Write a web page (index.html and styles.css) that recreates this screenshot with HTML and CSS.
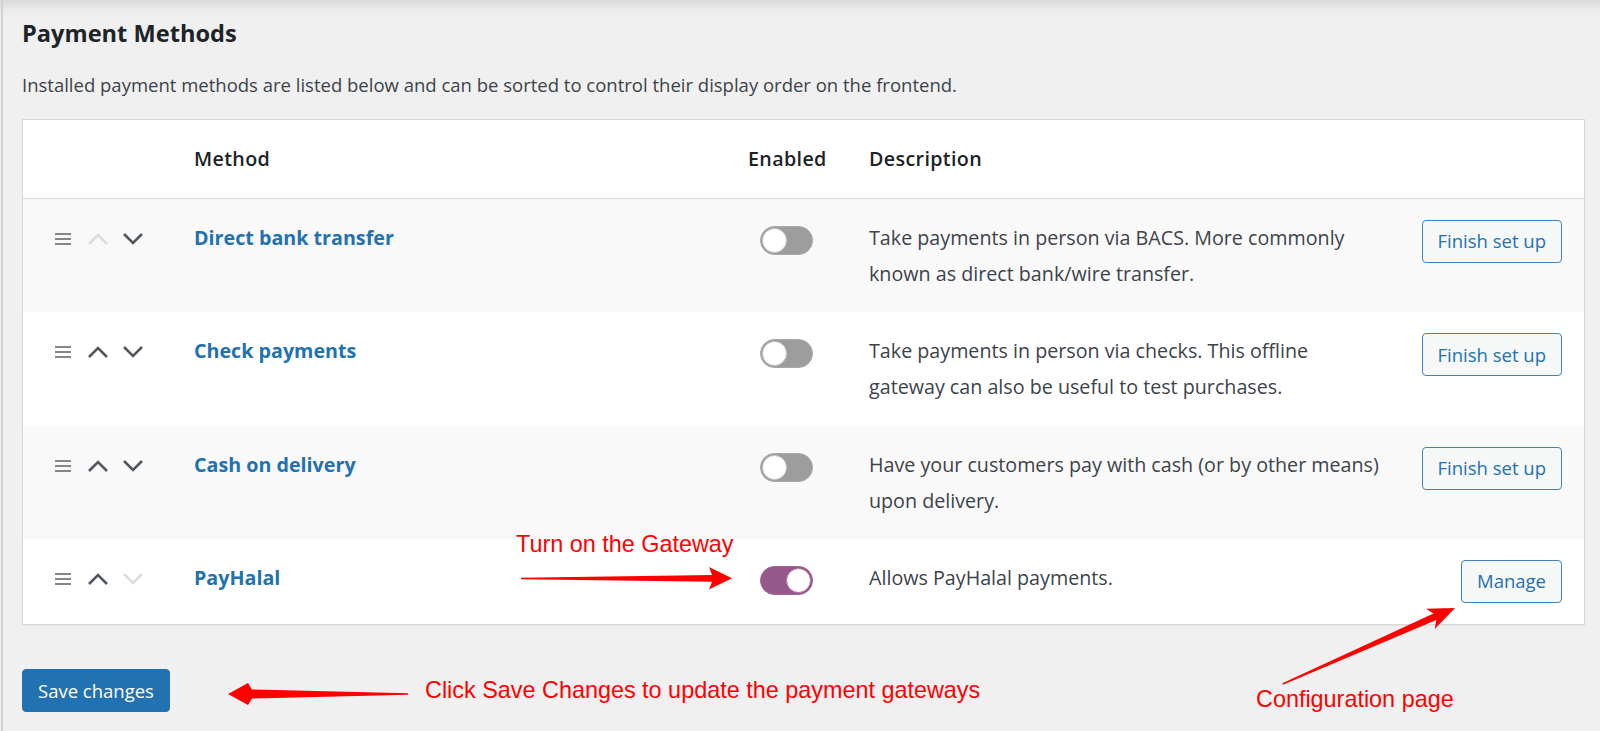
FILE: index.html
```html
<!DOCTYPE html>
<html lang="en">
<head>
<meta charset="utf-8">
<title>Payment Methods</title>
<link rel="stylesheet" href="styles.css">
</head>
<body>
<div class="page">
  <h2 class="title">Payment Methods</h2>
  <p class="intro">Installed payment methods are listed below and can be sorted to control their display order on the frontend.</p>

  <div class="gateways">
    <div class="row head">
      <div class="sort"></div>
      <div class="name">Method</div>
      <div class="status">Enabled</div>
      <div class="desc">Description</div>
      <div class="action"></div>
    </div>

    <div class="row alt">
      <div class="sort">
        <svg class="drag" width="16" height="12" viewBox="0 0 16 12"><rect y="0" width="16" height="2"/><rect y="5" width="16" height="2"/><rect y="10" width="16" height="2"/></svg>
        <svg class="chev off" width="22" height="12" viewBox="0 0 22 12"><path d="M2 11 L11 2 L20 11"/></svg>
        <svg class="chev" width="22" height="12" viewBox="0 0 22 12"><path d="M2 1 L11 10 L20 1"/></svg>
      </div>
      <div class="name"><a href="#">Direct bank transfer</a></div>
      <div class="status"><span class="toggle"></span></div>
      <div class="desc">Take payments in person via BACS. More commonly<br>known as direct bank/wire transfer.</div>
      <div class="action"><a class="btn" href="#">Finish set up</a></div>
    </div>

    <div class="row">
      <div class="sort">
        <svg class="drag" width="16" height="12" viewBox="0 0 16 12"><rect y="0" width="16" height="2"/><rect y="5" width="16" height="2"/><rect y="10" width="16" height="2"/></svg>
        <svg class="chev" width="22" height="12" viewBox="0 0 22 12"><path d="M2 11 L11 2 L20 11"/></svg>
        <svg class="chev" width="22" height="12" viewBox="0 0 22 12"><path d="M2 1 L11 10 L20 1"/></svg>
      </div>
      <div class="name"><a href="#">Check payments</a></div>
      <div class="status"><span class="toggle"></span></div>
      <div class="desc">Take payments in person via checks. This offline<br>gateway can also be useful to test purchases.</div>
      <div class="action"><a class="btn" href="#">Finish set up</a></div>
    </div>

    <div class="row alt">
      <div class="sort">
        <svg class="drag" width="16" height="12" viewBox="0 0 16 12"><rect y="0" width="16" height="2"/><rect y="5" width="16" height="2"/><rect y="10" width="16" height="2"/></svg>
        <svg class="chev" width="22" height="12" viewBox="0 0 22 12"><path d="M2 11 L11 2 L20 11"/></svg>
        <svg class="chev" width="22" height="12" viewBox="0 0 22 12"><path d="M2 1 L11 10 L20 1"/></svg>
      </div>
      <div class="name"><a href="#">Cash on delivery</a></div>
      <div class="status"><span class="toggle"></span></div>
      <div class="desc">Have your customers pay with cash (or by other means)<br>upon delivery.</div>
      <div class="action"><a class="btn" href="#">Finish set up</a></div>
    </div>

    <div class="row last">
      <div class="sort">
        <svg class="drag" width="16" height="12" viewBox="0 0 16 12"><rect y="0" width="16" height="2"/><rect y="5" width="16" height="2"/><rect y="10" width="16" height="2"/></svg>
        <svg class="chev" width="22" height="12" viewBox="0 0 22 12"><path d="M2 11 L11 2 L20 11"/></svg>
        <svg class="chev off" width="22" height="12" viewBox="0 0 22 12"><path d="M2 1 L11 10 L20 1"/></svg>
      </div>
      <div class="name"><a href="#">PayHalal</a></div>
      <div class="status"><span class="toggle on"></span></div>
      <div class="desc">Allows PayHalal payments.</div>
      <div class="action"><a class="btn" href="#">Manage</a></div>
    </div>
  </div>

  <div class="submit"><button class="primary" type="button">Save changes</button></div>

  <div class="annotations">
    <svg class="arrows" width="1600" height="731" viewBox="0 0 1600 731">
      <polygon points="521,577.7 712,575 709,567 732,578.3 709,589.5 712,581.8 521,579.3"/>
      <polygon points="408,693.2 252,689.5 248,683 228,694 248,705 252,698.5 408,694.8"/>
      <polygon points="1283,684.7 1436.3,620 1434.7,629 1455,608 1425.9,608.8 1433.5,613.6 1282.4,683.3"/>
    </svg>
    <span class="note note-gateway">Turn on the Gateway</span>
    <span class="note note-save">Click Save Changes to update the payment gateways</span>
    <span class="note note-config">Configuration page</span>
  </div>
</div>
</body>
</html>
```

FILE: styles.css
```css
html {
  background: #f0f0f0;
}

body {
  margin: 0;
  min-height: 731px;
  background: linear-gradient(to bottom, #d9d9d9 0, #ebebeb 10px, #f0f0f0 18px);
  font-family: "Open Sans", "Noto Sans", sans-serif;
  font-size: 18.5px;
  color: #3c434a;
}

.page {
  position: relative;
  min-height: 731px;
  box-sizing: border-box;
  margin-left: 1px;
  border-left: 2px solid #d2d2d2;
  padding: 18px 15px 0 19px;
}

.title {
  margin: 0;
  font-size: 23.6px;
  line-height: 30px;
  font-weight: 700;
  color: #1d2327;
}

.intro {
  margin: 23px 0 20px;
  line-height: 28px;
  color: #3c434a;
}

.gateways {
  background: #fff;
  border: 1px solid #d6d6d8;
  box-shadow: 0 1px 1px rgba(0, 0, 0, 0.04);
}

.row {
  display: grid;
  grid-template-columns: 139px 554px 121px 1fr auto;
  align-items: start;
  padding: 21px 22px 20.4px 32px;
  font-size: 19.7px;
  line-height: 36px;
  background: #fff;
}

.row.last {
  padding-bottom: 20.5px;
}

.row.alt {
  background: #f9f9f9;
}

.row.head {
  height: 79px;
  box-sizing: border-box;
  padding-top: 0;
  padding-bottom: 0;
  align-items: center;
  border-bottom: 1px solid #d6d6d8;
  font-weight: 600;
  letter-spacing: 0.35px;
  color: #1d2327;
}

.sort {
  display: flex;
  align-items: center;
  height: 36px;
  padding-top: 2px;
  box-sizing: border-box;
}

.drag {
  fill: #82878c;
  margin-right: 16px;
}

.chev {
  fill: none;
  stroke: #50575e;
  stroke-width: 2.6;
  margin-right: 13px;
}

.chev.off {
  stroke: #dcdcde;
}

.name a {
  color: #2271b1;
  font-weight: 700;
  text-decoration: none;
}

.status {
  padding-left: 12px;
}

.head .status {
  padding-left: 0;
}

.toggle {
  display: block;
  position: relative;
  width: 53px;
  height: 29px;
  margin-top: 6px;
  box-sizing: border-box;
  border-radius: 15px;
  background: #9d9d9d;
  border: 1px solid #a8a8a8;
}

.toggle::after {
  content: "";
  position: absolute;
  top: 1px;
  left: 1px;
  width: 25px;
  height: 25px;
  box-sizing: border-box;
  border-radius: 50%;
  background: #fff;
  border: 1px solid #c4c4c4;
}

.toggle.on {
  background: #96588a;
  border-color: #9b6290;
}

.toggle.on::after {
  left: auto;
  right: 1px;
  border-color: #a87a9e;
}

.desc {
  color: #3c434a;
}

.head .desc {
  color: #1d2327;
}

.action {
  display: flex;
  justify-content: flex-end;
}

.btn {
  display: inline-flex;
  align-items: center;
  height: 43px;
  box-sizing: border-box;
  padding: 0 15px;
  border: 1px solid #3d82bf;
  border-radius: 4px;
  background: #f6f7f7;
  color: #2271b1;
  font-size: 18.5px;
  text-decoration: none;
  line-height: 1;
}

.submit {
  margin-top: 44px;
}

.primary {
  height: 43px;
  padding: 0 15px;
  border: 1px solid #2271b1;
  border-radius: 4px;
  background: #2271b1;
  color: #fff;
  font-family: inherit;
  font-size: 18.5px;
}

.annotations {
  position: absolute;
  inset: 0 auto auto -3px;
  width: 1600px;
  height: 731px;
  pointer-events: none;
}

.arrows {
  position: absolute;
  left: 0;
  top: 0;
  fill: #ff0000;
}

.note {
  position: absolute;
  font-family: "Liberation Sans", Arial, sans-serif;
  font-size: 23.4px;
  line-height: 24px;
  color: #ff0000;
  white-space: nowrap;
}

.note-gateway {
  left: 516px;
  top: 532px;
}

.note-save {
  left: 425px;
  top: 678px;
}

.note-config {
  left: 1256px;
  top: 687px;
}
```
